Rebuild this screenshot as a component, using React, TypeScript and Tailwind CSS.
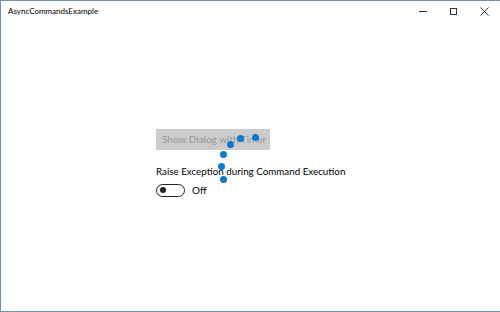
import React from "react";

const font = { fontFamily: '"Segoe UI", Lato, "Noto Sans", sans-serif' };

export default function App() {
  const dots = [
    [230, 144],
    [240, 138],
    [255, 137],
    [223, 154],
    [221, 166],
    [223, 179],
  ];
  return (
    <div
      className="relative w-[500px] h-[312px] bg-white overflow-hidden border-l border-t border-b border-[#7090ab] border-r-[#b0b0b0]"
      style={font}
    >
      <div className="flex items-center h-[20px] pl-[7px]">
        <span className="text-[8px] text-black leading-none">AsyncCommandsExample</span>
        <div className="ml-auto flex items-center h-full">
          <div className="w-[31px] flex justify-center">
            <div className="w-[8px] h-px bg-[#333]" />
          </div>
          <div className="w-[31px] flex justify-center">
            <div className="w-[7px] h-[7px] border border-[#333]" />
          </div>
          <div className="w-[31px] flex justify-center">
            <svg width="9" height="9" viewBox="0 0 9 9">
              <path d="M0.5 0.5 L8.5 8.5 M8.5 0.5 L0.5 8.5" stroke="#333" strokeWidth="1" />
            </svg>
          </div>
        </div>
      </div>
      <div className="flex flex-col items-start pl-[155px] pt-[108px]">
        <div className="h-[21px] w-[114px] bg-[#cccccc] flex items-center pl-[6px]">
          <span className="text-[10px] text-[#999999] whitespace-nowrap">Show Dialog with Timer</span>
        </div>
        <div className="mt-[17px] text-[9.8px] text-black leading-none whitespace-nowrap">
          Raise Exception during Command Execution
        </div>
        <div className="mt-[7px] flex items-center">
          <div className="w-[29px] h-[13px] rounded-full border-[1.5px] border-[#222] flex items-center pl-[3px]">
            <div className="w-[6px] h-[6px] rounded-full bg-[#222]" />
          </div>
          <span className="ml-[7px] text-[10px] text-black leading-none">Off</span>
        </div>
      </div>
      {dots.map(([x, y], i) => (
        <div
          key={i}
          className="absolute w-[7px] h-[7px] rounded-full bg-[#0a7bd4]"
          style={{ left: x - 4, top: y - 4 }}
        />
      ))}
    </div>
  );
}
